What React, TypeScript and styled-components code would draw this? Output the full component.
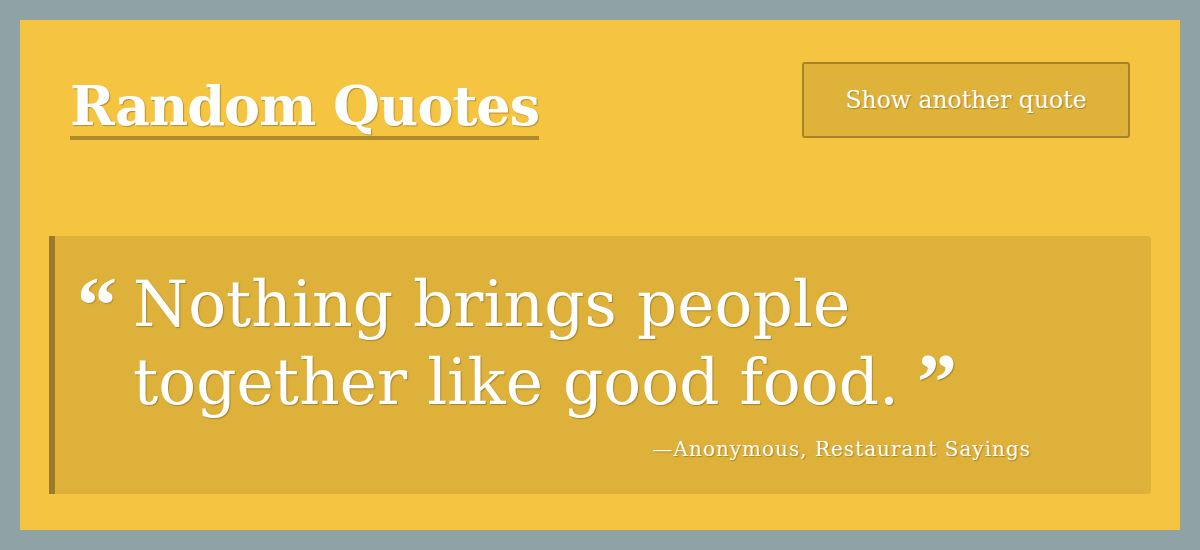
import React from "react";
import styled, { createGlobalStyle } from "styled-components";

const Global = createGlobalStyle`
  html, body { margin: 0; padding: 0; }
  body {
    background: #8fa2a6;
    font-family: "DejaVu Serif", "Liberation Serif", serif;
  }
`;

const Page = styled.div`
  padding: 20px;
  box-sizing: border-box;
  width: 1200px;
  height: 550px;
`;

const Card = styled.main`
  background: #f5c542;
  height: 510px;
  box-sizing: border-box;
  padding: 40px 29px 36px;
  display: flex;
  flex-direction: column;
`;

const Header = styled.header`
  display: flex;
  justify-content: space-between;
  align-items: center;
  padding: 0 21px;
`;

const Title = styled.h1`
  margin: 0;
  padding-top: 16px;
  font-family: "DejaVu Serif", serif;
  font-weight: 700;
  font-size: 54px;
  line-height: 60px;
  color: #ffffff;
  text-shadow: 1px 1px 1px rgba(120, 90, 20, 0.5);
  border-bottom: 4px solid #b0892c;
  letter-spacing: -1px;
`;

const Button = styled.button`
  width: 328px;
  height: 76px;
  background: #dfb23a;
  border: 2px solid #a78328;
  border-radius: 3px;
  color: #ffffff;
  font-family: "DejaVu Serif", serif;
  font-size: 23.5px;
  text-shadow: 1px 1px 1px rgba(120, 90, 20, 0.5);
  cursor: pointer;
`;

const QuoteBox = styled.blockquote`
  margin: 96px 0 0;
  flex: 1;
  background: #ddb13a;
  border-left: 6px solid #9b7a2b;
  border-radius: 0 4px 4px 0;
  padding: 30px 120px 0 22px;
  display: flex;
  flex-direction: column;
`;

const QuoteRow = styled.div`
  display: flex;
  align-items: flex-start;
`;

const OpenMark = styled.span`
  width: 56px;
  flex: none;
  font-family: "Liberation Serif", serif;
  font-weight: 700;
  font-size: 80px;
  line-height: 78px;
  color: #ffffff;
  text-shadow: 1px 1px 1px rgba(120, 90, 20, 0.4);
`;

const CloseMark = styled.span`
  margin-left: 18px;
  font-family: "Liberation Serif", serif;
  font-weight: 700;
  font-size: 80px;
  line-height: 0;
  vertical-align: -5px;
`;

const QuoteText = styled.p`
  margin: 0;
  font-size: 63px;
  line-height: 78px;
  color: #ffffff;
  text-shadow: 1px 1px 1px rgba(120, 90, 20, 0.5);
`;

const Attribution = styled.cite`
  margin-top: 15px;
  align-self: flex-end;
  font-style: normal;
  font-size: 20px;
  letter-spacing: 1px;
  color: #ffffff;
  text-shadow: 1px 1px 1px rgba(120, 90, 20, 0.5);
`;

export default function App() {
  return (
    <>
      <Global />
      <Page>
        <Card>
          <Header>
            <Title>Random Quotes</Title>
            <Button>Show another quote</Button>
          </Header>
          <QuoteBox>
            <QuoteRow>
              <OpenMark>“</OpenMark>
              <QuoteText>
                Nothing brings people
                <br />
                together like good food.<CloseMark>”</CloseMark>
              </QuoteText>
            </QuoteRow>
            <Attribution>—Anonymous, Restaurant Sayings</Attribution>
          </QuoteBox>
        </Card>
      </Page>
    </>
  );
}
